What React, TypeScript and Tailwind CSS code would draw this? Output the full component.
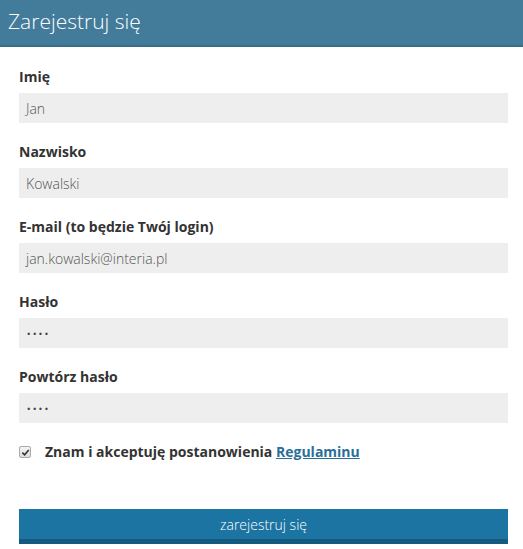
const fields = [
  { label: 'Imię', value: 'Jan' },
  { label: 'Nazwisko', value: 'Kowalski' },
  { label: 'E-mail (to będzie Twój login)', value: 'jan.kowalski@interia.pl' },
  { label: 'Hasło', value: '••••', secret: true },
  { label: 'Powtórz hasło', value: '••••', secret: true },
]

export default function App() {
  return (
    <div className="w-[523px] h-[549px] bg-white overflow-hidden font-['Open_Sans',sans-serif]">
      <div className="h-[47px] bg-[#437c9a] border-b-2 border-[#3a6d88] pl-[8px] pt-[6px]">
        <h1 className="text-[21px] font-light text-white leading-[30px]">Zarejestruj się</h1>
      </div>

      <div className="pl-[19px] pr-[15px] pt-[20px]">
        {fields.map((f) => (
          <div key={f.label} className="mb-[19px]">
            <div className="text-[14px] font-bold text-[#333] leading-[20px] mb-[6px]">{f.label}</div>
            <div className="h-[30px] bg-[#eeeeee] pl-[7px] flex items-center text-[14px] font-light text-[#555]">
              {f.secret ? (
                <span className="text-[9px] font-semibold tracking-[2.5px] text-[#444] pl-[1px] pt-[2px]">{f.value}</span>
              ) : (
                f.value
              )}
            </div>
          </div>
        ))}

        <div className="flex items-center mt-[18px]">
          <span className="w-[12px] h-[12px] rounded-[2px] border border-[#a9a9a9] bg-gradient-to-b from-[#f4f4f4] to-[#dcdcdc] flex items-center justify-center">
            <svg width="9" height="9" viewBox="0 0 10 10">
              <path d="M1.5 5.2 L4 7.6 L8.6 2.2" fill="none" stroke="#333" strokeWidth="1.8" />
            </svg>
          </span>
          <span className="ml-[14px] text-[14px] font-bold text-[#333] leading-[20px]">
            Znam i akceptuję postanowienia{' '}
            <a href="#" className="text-[#2a6f97] underline">Regulaminu</a>
          </span>
        </div>

        <button className="mt-[47px] w-full h-[35px] bg-[#1c74a2] border-b-[5px] border-[#155a7f] text-white text-[14px] font-light">
          zarejestruj się
        </button>
      </div>
    </div>
  )
}
